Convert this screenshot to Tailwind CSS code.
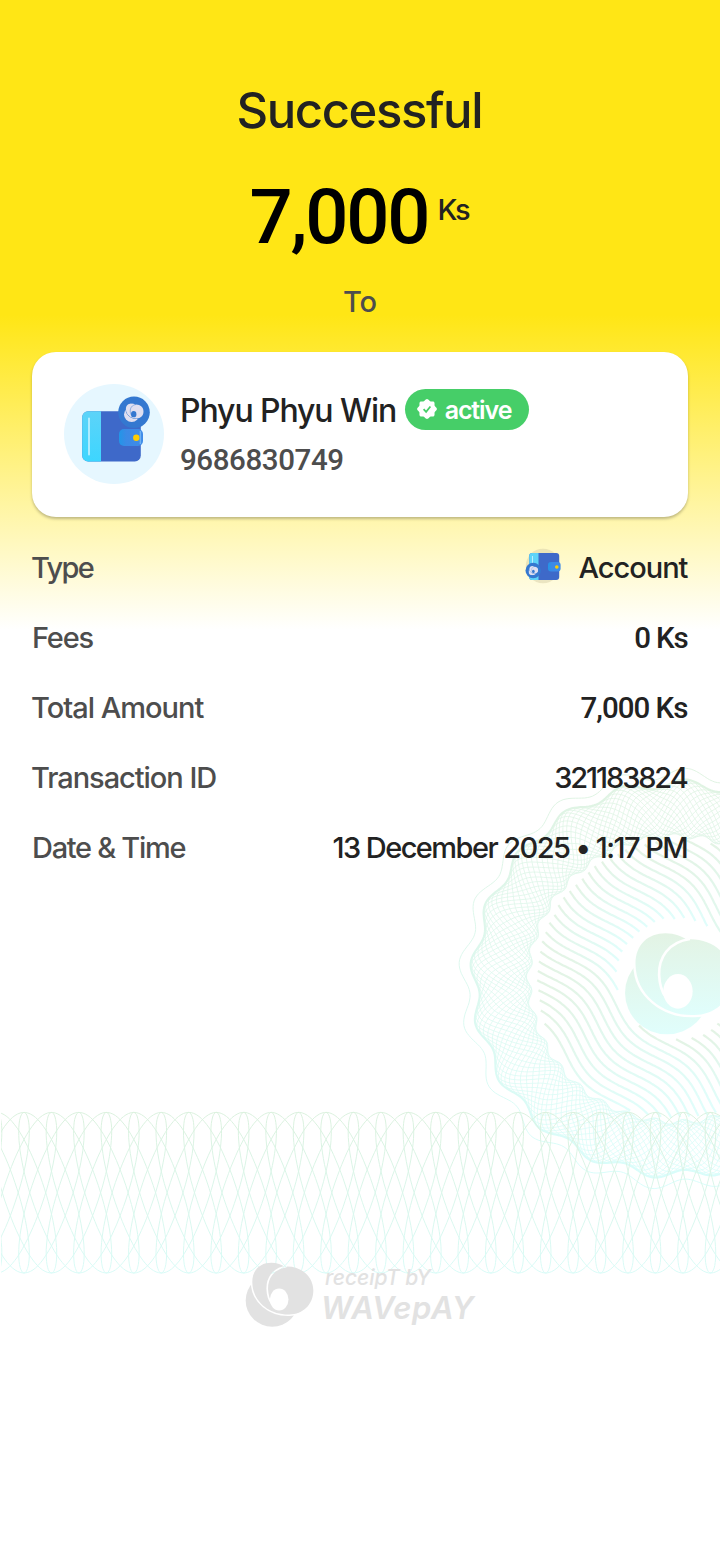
<!DOCTYPE html>
<html lang="en">

<head>
    <meta charset="utf-8">
    <meta name="viewport" content="width=device-width, initial-scale=1">
    <title>Receipt</title>
    <script src="https://cdn.jsdelivr.net/npm/@tailwindcss/browser@4"></script>
</head>

<body class="bg-white font-['Inter','Open_Sans',sans-serif] font-medium text-[#222222]">
    <svg class="absolute w-0 h-0">
      <defs>
        <mask id="cut-back" maskUnits="userSpaceOnUse" x="40" y="30" width="220" height="210">
          <rect x="40" y="30" width="220" height="210" fill="#fff" />
          <path d="M68 98C67 60 92 38 125 38C143 38 157 44 165 50C215 46 252 80 252 122C252 165 220 194 180 194C120 196 69 155 68 98Z" fill="#000" stroke="#000" stroke-width="9" />
        </mask>
        <mask id="cut-front" maskUnits="userSpaceOnUse" x="40" y="30" width="220" height="210">
          <rect x="40" y="30" width="220" height="210" fill="#fff" />
          <path d="M172 49C130 55 112 85 113 118C114 138 118 150 126 160" fill="none" stroke="#000" stroke-width="5" />
          <ellipse cx="149" cy="149" rx="28" ry="33" fill="#000" />
        </mask>
      </defs>
    </svg>

    <main class="relative w-[720px] h-[1568px] overflow-hidden bg-[linear-gradient(to_bottom,#ffe615_0px,#ffe615_315px,#ffffff_630px)]">
      <svg id="watermark" class="absolute inset-0" width="720" height="1568" viewBox="0 0 720 1568" fill="none">
        <defs>
          <linearGradient id="mint" x1="0" y1="0" x2="0" y2="1">
            <stop offset="0" stop-color="#e3f3e4" />
            <stop offset="1" stop-color="#e0fefc" />
          </linearGradient>
          <linearGradient id="mint-rosette" gradientUnits="userSpaceOnUse" x1="0" y1="770" x2="0" y2="1185">
            <stop offset="0" stop-color="#e0f3e2" />
            <stop offset="1" stop-color="#d9fdfb" />
          </linearGradient>
          <linearGradient id="mint-band" gradientUnits="userSpaceOnUse" x1="0" y1="1112" x2="0" y2="1273">
            <stop offset="0" stop-color="#dbf1de" />
            <stop offset="1" stop-color="#d9fbf7" />
          </linearGradient>
          <clipPath id="band-clip"><rect x="1" y="1100" width="719" height="190" /></clipPath>
        </defs>
        <path id="rosette-mesh" stroke="url(#mint-rosette)" stroke-width="0.8" />
        <path id="rosette-line" stroke="url(#mint-rosette)" stroke-width="1" />
        <path id="rosette-edge" stroke="url(#mint-rosette)" stroke-width="2" />
        <g id="rosette-waves" stroke="url(#mint)" stroke-width="2.2"></g>
        <path id="band" stroke="url(#mint-band)" stroke-width="1" clip-path="url(#band-clip)" />
        <svg x="624" y="932" width="109" height="103" viewBox="46 36 208 196" fill="url(#mint)">
          <ellipse cx="128" cy="152" rx="80" ry="79" mask="url(#cut-back)" />
          <path mask="url(#cut-front)" d="M68 98C67 60 92 38 125 38C143 38 157 44 165 50C215 46 252 80 252 122C252 165 220 194 180 194C120 196 69 155 68 98Z" />
        </svg>
      </svg>

      <div class="relative flex flex-col items-center pt-[81px]">
        <h1 class="h-[60px] text-[49px] leading-[60px] tracking-[-1.4px] mr-[1.4px]">Successful</h1>
        <div class="flex items-start mt-[35px] h-[80px]">
          <span class="mt-px font-['Roboto',sans-serif] text-[76px] leading-[80px] tracking-[-2.2px] mr-[2.2px] text-black">7,000</span>
          <span class="ml-[7px] mt-[14px] text-[29px] leading-[40px] tracking-[-2.5px] mr-[2.5px]">Ks</span>
        </div>
        <p class="mt-[26px] text-[29px] leading-[40px] text-[#4d4d4d]">To</p>
      </div>

      <section class="relative mx-8 mt-[30px] h-[165px] rounded-3xl bg-white shadow-[0_2px_3px_rgba(0,0,0,0.25)] flex items-start px-8 pt-8">
        <svg class="w-[100px] h-[100px] shrink-0" viewBox="0 0 100 100">
          <defs>
            <linearGradient id="flap" x1="0" y1="0" x2="0" y2="1">
              <stop offset="0" stop-color="#5dd3f8" /><stop offset="1" stop-color="#3dd6ff" />
            </linearGradient>
            <linearGradient id="clasp" x1="0" y1="0" x2="1" y2="0">
              <stop offset="0" stop-color="#2196e8" /><stop offset="0.3" stop-color="#3b8ae6" /><stop offset="1" stop-color="#3f8be8" />
            </linearGradient>
          </defs>
          <circle cx="50" cy="50" r="50" fill="#e6f7ff" />
          <rect x="18.2" y="27.2" width="58.6" height="50.4" rx="6" fill="#3e69c9" />
          <path d="M37 27.2H24.2a6 6 0 0 0-6 6v38.4a6 6 0 0 0 6 6H37z" fill="url(#flap)" />
          <path d="M25 34.5v36" stroke="#b9efff" stroke-width="1.8" stroke-linecap="round" />
          <circle cx="70" cy="28.3" r="15.8" fill="#3478d0" />
          <svg x="59.8" y="19.2" width="20" height="19" viewBox="46 36 208 196" fill="#dfdff0">
            <ellipse cx="128" cy="152" rx="80" ry="79" mask="url(#cut-back)" />
            <path mask="url(#cut-front)" d="M68 98C67 60 92 38 125 38C143 38 157 44 165 50C215 46 252 80 252 122C252 165 220 194 180 194C120 196 69 155 68 98Z" />
          </svg>
          <rect x="55" y="45" width="24" height="17" rx="5" fill="url(#clasp)" />
          <path d="M76.4 47v13" stroke="#6fb2f4" stroke-width="1.4" />
          <circle cx="72.3" cy="53.7" r="3.2" fill="#ffcc00" />
        </svg>
        <div class="ml-4">
          <div class="flex items-start h-[52px]">
            <span class="mt-px text-[32px] leading-[52px] tracking-[-1.1px] mr-[0.6px]">Phyu Phyu Win</span>
            <span class="flex items-center ml-2 mt-[5px] h-[41px] w-[124px] rounded-full bg-[#46ce68] pl-3 text-white">
              <svg class="w-5 h-5 -mt-px" viewBox="0 0 20 20">
                <path id="seal" fill="#fff" />
                <path d="M6.6 10.2l2.5 2.7 4.3-5.4" fill="none" stroke="#46ce68" stroke-width="1.7" />
              </svg>
              <span class="ml-2 text-[25px] font-semibold leading-[40px] tracking-[-1.1px]">active</span>
            </span>
          </div>
          <div class="mt-[4px] font-['Roboto',sans-serif] text-[29.5px] leading-[40px] tracking-[-0.4px] text-[#4d4d4d]">9686830749</div>
        </div>
      </section>

      <dl class="relative mx-8 mt-4 text-[29px]">
        <div class="flex items-center justify-between h-[70px]">
          <dt class="-ml-px tracking-[-1.7px] text-[#4d4d4d]">Type</dt>
          <dd class="flex items-center">
            <svg class="w-9 h-9 mr-[17px] -mt-1" viewBox="0 0 36 36">
              <circle cx="18" cy="18" r="17.2" fill="#d8cfa8" fill-opacity="0.5" />
              <rect x="4.2" y="5" width="30" height="27" rx="3" fill="#3e69c9" />
              <path d="M13.5 5H7.2a3 3 0 0 0-3 3v21a3 3 0 0 0 3 3h6.3z" fill="#5dd3f8" />
              <path d="M7.5 8v8" stroke="#b9efff" />
              <circle cx="8.2" cy="22.5" r="7.7" fill="#3478d0" />
              <svg x="3.4" y="18" width="10" height="9.4" viewBox="46 36 208 196" fill="#dfdff0">
                <ellipse cx="128" cy="152" rx="80" ry="79" mask="url(#cut-back)" />
                <path mask="url(#cut-front)" d="M68 98C67 60 92 38 125 38C143 38 157 44 165 50C215 46 252 80 252 122C252 165 220 194 180 194C120 196 69 155 68 98Z" />
              </svg>
              <rect x="23" y="14" width="12.6" height="9.4" rx="3" fill="url(#clasp)" />
              <circle cx="31.8" cy="19" r="1.8" fill="#ffcc00" />
            </svg>
            <span class="tracking-[-1px] mr-[0.5px]">Account</span>
          </dd>
        </div>
        <div class="flex items-center justify-between h-[70px]">
          <dt class="tracking-[-1.2px] text-[#4d4d4d]">Fees</dt>
          <dd class="font-['Roboto',sans-serif] text-[29.5px] tracking-[-1.2px] mr-[0.6px]">0 Ks</dd>
        </div>
        <div class="flex items-center justify-between h-[70px]">
          <dt class="-ml-px tracking-[-1px] text-[#4d4d4d]">Total Amount</dt>
          <dd class="font-['Roboto',sans-serif] text-[29.5px] tracking-[-1px] mr-[0.6px]">7,000 Ks</dd>
        </div>
        <div class="flex items-center justify-between h-[70px]">
          <dt class="-ml-px tracking-[-1.05px] text-[#4d4d4d]">Transaction ID</dt>
          <dd class="tracking-[-2.1px] mr-[1.4px]">321183824</dd>
        </div>
        <div class="flex items-center justify-between h-[70px]">
          <dt class="tracking-[-1.3px] text-[#4d4d4d]">Date &amp; Time</dt>
          <dd class="tracking-[-1.55px] mr-[0.9px]">13 December 2025 • 1:17 PM</dd>
        </div>
      </dl>

      <footer class="relative flex justify-center mt-[379px] text-[#e2e2e2] italic">
        <svg class="w-[69px] h-[65px]" viewBox="46 36 208 196" fill="currentColor">
          <ellipse cx="128" cy="152" rx="80" ry="79" mask="url(#cut-back)" />
          <path mask="url(#cut-front)" d="M68 98C67 60 92 38 125 38C143 38 157 44 165 50C215 46 252 80 252 122C252 165 220 194 180 194C120 196 69 155 68 98Z" />
        </svg>
        <div class="flex flex-col ml-[7px] w-[154px] whitespace-nowrap">
          <span class="ml-1 mt-1 text-[21px] leading-6">receipT bY</span>
          <span class="text-[31px] leading-[36px] font-semibold tracking-[0.6px]">WAVepAY</span>
        </div>
      </footer>
    </main>

    <script>
      const el = (id) => document.getElementById(id);
      const line = (pts) => 'M' + pts.map(([x, y]) => x.toFixed(1) + ' ' + y.toFixed(1)).join('L');

      // verified seal with eight soft lobes
      const seal = [];
      for (let i = 0; i < 96; i++) {
        const a = i / 96 * Math.PI * 2;
        const r = 9.1 + 0.8 * Math.cos(8 * a);
        seal.push([10 + r * Math.cos(a), 10 + r * Math.sin(a)]);
      }
      el('seal').setAttribute('d', line(seal) + 'Z');

      // rosette, angles in degrees clockwise from the left
      const CX = 677, CY = 979, STEP = 17.57;
      const at = (deg, r) => {
        const a = deg * Math.PI / 180;
        return [CX - r * Math.cos(a), CY - r * 0.965 * Math.sin(a)];
      };
      const lobes = (deg) => Math.cos((deg - 4.5) / STEP * Math.PI * 2);
      const outer = (deg) => 202.5 + 4.5 * lobes(deg);
      const inner = (deg) => 148 + 2.5 * Math.cos((deg - 1) / 11 * Math.PI * 2);
      const ring = (fn) => {
        const pts = [];
        for (let d = -120; d <= 120; d += 0.75) pts.push(at(d, fn(d)));
        return line(pts);
      };
      let mesh = '';
      for (let k = 0; k < 22; k++) {
        mesh += ring((d) => {
          const t = 0.5 + 0.5 * Math.sin((d / 45 + k / 22) * Math.PI * 2);
          return inner(d) + (outer(d) - inner(d)) * t;
        });
      }
      el('rosette-mesh').setAttribute('d', mesh);
      el('rosette-line').setAttribute('d', ring((d) => 213 + 5.5 * lobes(d)));
      el('rosette-edge').setAttribute('d', ring(outer));

      // diagonal waves between the mesh and the logo
      let waves = '';
      for (let n = -18; n <= 18; n++) {
        let seg = [];
        for (let s = -170; s <= 170; s += 2) {
          const off = n * 8.8 + 7 * Math.sin((s - 40) / 129 * Math.PI * 2);
          const x = CX + (s + off) * 0.7071, y = CY + (s - off) * 0.7071;
          const r = Math.hypot(x - CX, y - CY);
          if (r < 140 && r > 60) seg.push([x, y]);
          else {
            if (seg.length > 3) waves += '<path d="' + line(seg) + '"/>';
            seg = [];
          }
        }
      }
      el('rosette-waves').innerHTML = waves;

      // guilloche band: looping curves, upright and flipped
      let band = '';
      for (let k = 0; k < 4; k++) {
        for (const dir of [1, -1]) {
          const pts = [];
          for (let t = -13; t < 44; t += 0.08) {
            const x = 24 + k * 27.46 + 17.48 * t + 21.7 * Math.sin(t) - 3.6 * Math.sin(2 * t);
            pts.push([x, 1192.7 - dir * 80.3 * Math.cos(t)]);
          }
          band += line(pts);
        }
      }
      el('band').setAttribute('d', band);
    </script>
</body>

</html>
